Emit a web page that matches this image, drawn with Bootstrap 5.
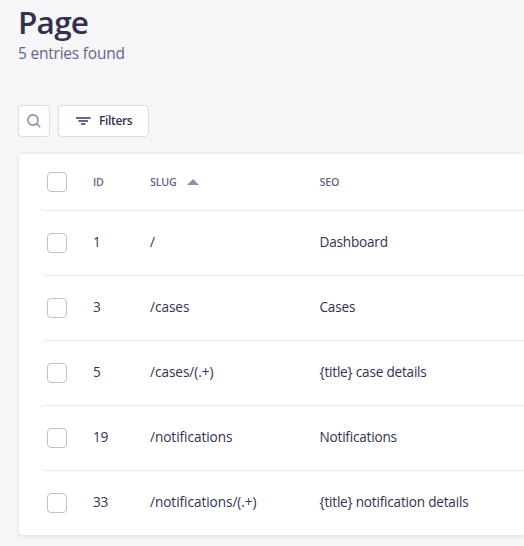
<!DOCTYPE html>
<html lang="en">
<head>
<meta charset="utf-8">
<meta name="viewport" content="width=device-width, initial-scale=1">
<title>Page</title>
<link href="https://cdn.jsdelivr.net/npm/bootstrap@5.3.0/dist/css/bootstrap.min.css" rel="stylesheet">
<style>
body{background:#f6f6f9;color:#32324d;font-family:"Segoe UI","Open Sans","Noto Sans",sans-serif;font-size:14px;line-height:20px;height:546px}
.page-inset{padding-left:18px}
.page-title{font-size:31.5px;line-height:40px;font-weight:600;letter-spacing:-.75px;margin-top:2px}
.page-sub{font-size:15.5px;line-height:24px;color:#666687;letter-spacing:-.22px;margin-top:-1px}
.tools{margin-top:40px}
.tool{--bs-btn-padding-x:0;--bs-btn-padding-y:0;height:32px;background:#fff;border:1px solid #dcdce4;border-radius:4px;color:#32324d;font-size:12px;font-weight:600;line-height:16px}
.tool-search{width:32px}
.tool-filter{width:91px;padding-left:17px;letter-spacing:-.35px}
.panel{margin:17px 0 0 19px;padding-left:24px;background:#fff;border-radius:4px 0 0 4px;box-shadow:0 1px 4px rgba(33,33,52,.13)}
.entries{--bs-table-bg:transparent;table-layout:fixed;color:#32324d}
.entries>:not(caption)>*>*{padding:0;border-bottom:1px solid #eaeaef;vertical-align:middle;white-space:nowrap}
.entries td{height:65px;letter-spacing:-.21px;font-size:13.6px}
.entries td:nth-child(3){letter-spacing:-.05px}
.entries td:not(:first-child){padding-bottom:1px}
.entries th{height:56px;font-size:10.7px;font-weight:600;color:#666687;letter-spacing:-.2px}
.entries tbody tr:last-child td{border-bottom:0}
.entries .form-check-input{width:20px;height:20px;margin:0 0 0 4px;border:1px solid #c0c0cf;border-radius:4px;display:block;background-color:#fff}
.c-check{width:50px}.c-id{width:57px}.c-slug{width:169.5px}
.sort{margin-left:10px}
</style>
</head>
<body class="overflow-hidden">
<header class="page-inset d-flex flex-column">
  <h1 class="page-title mb-0">Page</h1>
  <p class="page-sub mb-0">5 entries found</p>
</header>
<div class="tools page-inset d-flex gap-2">
  <button class="btn tool tool-search d-flex align-items-center justify-content-center" aria-label="Search">
    <svg width="14" height="14" viewBox="0 0 14 14" fill="none" stroke="#8e8ea9" stroke-width="1.6"><circle cx="6" cy="6" r="5.1"/><path d="M9.7 9.7 13.3 13.3"/></svg>
  </button>
  <button class="btn tool tool-filter d-flex align-items-center gap-2">
    <svg width="15" height="8" viewBox="0 0 15 8" fill="#666687"><path d="M0 0h14.5v2H0zM2.4 3h9.6v2H2.4zM5 6h4.4v2H5z"/></svg>
    <span>Filters</span>
  </button>
</div>
<main class="panel">
  <table class="table entries mb-0">
    <colgroup><col class="c-check"><col class="c-id"><col class="c-slug"><col></colgroup>
    <thead>
      <tr><th><input class="form-check-input" type="checkbox" aria-label="Select all"></th><th>ID</th><th><span class="d-flex align-items-center">SLUG<svg class="sort" width="12" height="6" viewBox="0 0 12 6" fill="#8e8ea9"><path d="M0 6 6 0l6 6z"/></svg></span></th><th>SEO</th></tr>
    </thead>
    <tbody>
      <tr><td><input class="form-check-input" type="checkbox" aria-label="Select 1"></td><td>1</td><td>/</td><td>Dashboard</td></tr>
      <tr><td><input class="form-check-input" type="checkbox" aria-label="Select 3"></td><td>3</td><td>/cases</td><td>Cases</td></tr>
      <tr><td><input class="form-check-input" type="checkbox" aria-label="Select 5"></td><td>5</td><td>/cases/(.+)</td><td>{title} case details</td></tr>
      <tr><td><input class="form-check-input" type="checkbox" aria-label="Select 19"></td><td>19</td><td>/notifications</td><td>Notifications</td></tr>
      <tr><td><input class="form-check-input" type="checkbox" aria-label="Select 33"></td><td>33</td><td>/notifications/(.+)</td><td>{title} notification details</td></tr>
    </tbody>
  </table>
</main>
<script src="https://cdn.jsdelivr.net/npm/bootstrap@5.3.0/dist/js/bootstrap.bundle.min.js"></script>
</body>
</html>
